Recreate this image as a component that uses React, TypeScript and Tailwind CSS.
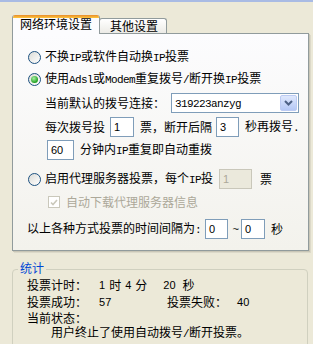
import React from "react";

const L = ({ children }: { children: React.ReactNode }) => (
  <span className="font-['Liberation_Mono',monospace] text-[11px] tracking-[-0.6px]">{children}</span>
);

const Radio = ({ checked }: { checked?: boolean }) => (
  <span className="w-[13px] h-[13px] rounded-full border border-[#1c5180] bg-[linear-gradient(135deg,#dcdcd7,#ffffff)] flex items-center justify-center shrink-0">
    {checked && (
      <span className="w-[7px] h-[7px] rounded-full bg-[radial-gradient(circle_at_40%_35%,#a8f0a4,#21a121_70%)]" />
    )}
  </span>
);

const Input = ({ w, value, disabled }: { w: string; value: string; disabled?: boolean }) => (
  <span
    className={`${w} h-[20px] shrink-0 border flex items-center pl-[3px] font-['Liberation_Sans',sans-serif] text-[11px] ${
      disabled ? "border-[#c9c7ba] bg-[#ebe9dc] text-[#aca899]" : "border-[#7f9db9] bg-white text-black"
    }`}
  >
    {value}
  </span>
);

export default function App() {
  return (
    <div className="w-[313px] h-[344px] overflow-hidden bg-[#ece9d8] text-black text-[12px] leading-[12px] font-['Noto_Sans_CJK_SC',sans-serif]">
      <div className="h-[2px] bg-[#a9bbe4]" />
      {/* tabs */}
      <div className="relative z-10 flex items-end ml-[12px] mt-[13px] h-[19px]">
        <div className="relative z-10 w-[88px] h-[19px] bg-[#fcfcfe] border-x border-[#919b9c] rounded-t-[3px] overflow-hidden flex flex-col">
          <div className="h-[3px] bg-[linear-gradient(180deg,#e68b2c,#ffc73c)]" />
          <div className="pl-[7px] leading-[12px]">网络环境设置</div>
        </div>
        <div className="-ml-px mb-[1px] w-[68px] h-[15px] border border-b-0 border-[#919b9c] rounded-t-[3px] bg-[linear-gradient(180deg,#ffffff,#ecebe6)] pl-[10px] pt-[1px] leading-[12px]">
          其他设置
        </div>
      </div>
      {/* panel */}
      <div className="-mt-px ml-[12px] w-[297px] h-[218px] border border-[#919b9c] bg-[linear-gradient(180deg,#fcfcfe,#f3f2ec)] shadow-[1px_1px_0_#c9c6b6,2px_2px_0_#dcd9c9] flex flex-col">
        <div className="mt-[15px] h-[16px] flex items-center pl-[15px]">
          <Radio />
          <span className="ml-[4px]">
            不换<L>IP</L>或软件自动换<L>IP</L>投票
          </span>
        </div>
        <div className="mt-[6px] h-[16px] flex items-center pl-[15px]">
          <Radio checked />
          <span className="ml-[4px]">
            使用<L>Adsl</L>或<L>Modem</L>重复拨号<L>/</L>断开换<L>IP</L>投票
          </span>
        </div>
        <div className="mt-[6px] h-[20px] flex items-center pl-[32px]">
          <span>当前默认的拨号连接：</span>
          <span className="ml-[6px] w-[128px] h-[20px] border border-[#7f9db9] bg-white flex items-center justify-between">
            <span className="pl-[3px]">
              <L>319223anzyg</L>
            </span>
            <span className="w-[17px] h-[16px] mr-[1px] rounded-[2px] border border-[#bccbf3] bg-[linear-gradient(180deg,#dfe8fd,#b5c8f6)] flex items-center justify-center">
              <svg width="9" height="6" viewBox="0 0 9 6">
                <path d="M1 1 L4.5 4.5 L8 1" fill="none" stroke="#4d6185" strokeWidth="2" />
              </svg>
            </span>
          </span>
        </div>
        <div className="mt-[4px] h-[20px] flex items-center pl-[32px]">
          <span>每次拨号投</span>
          <span className="ml-[5px]">
            <Input w="w-[24px]" value="1" />
          </span>
          <span className="ml-[6px]">票，断开后隔</span>
          <span className="ml-[4px]">
            <Input w="w-[23px]" value="3" />
          </span>
          <span className="ml-[6px]">
            秒再拨号<L>.</L>
          </span>
        </div>
        <div className="mt-[3px] h-[20px] flex items-center pl-[34px]">
          <Input w="w-[27px]" value="60" />
          <span className="ml-[6px]">
            分钟内<L>IP</L>重复即自动重拨
          </span>
        </div>
        <div className="mt-[9px] h-[20px] flex items-center pl-[15px]">
          <Radio />
          <span className="ml-[4px]">
            启用代理服务器投票，每个<L>IP</L>投
          </span>
          <span className="ml-[6px]">
            <Input w="w-[33px]" value="1" disabled />
          </span>
          <span className="ml-[8px]">票</span>
        </div>
        <div className="mt-[5px] h-[16px] flex items-center pl-[35px]">
          <span className="w-[12px] h-[12px] border border-[#cac8bb] bg-white flex items-center justify-center">
            <svg width="8" height="7" viewBox="0 0 8 7">
              <path d="M1 3.5 L3 5.5 L7 1" fill="none" stroke="#cac8bb" strokeWidth="1.6" />
            </svg>
          </span>
          <span className="ml-[6px] text-[#aca899]">自动下载代理服务器信息</span>
        </div>
        <div className="mt-[9px] h-[20px] flex items-center pl-[14px]">
          <span>
            以上各种方式投票的时间间隔为<L>:</L>
          </span>
          <span className="ml-[4px]">
            <Input w="w-[23px]" value="0" />
          </span>
          <span className="ml-[2px] w-[11px] text-center">
            <L>~</L>
          </span>
          <span>
            <Input w="w-[24px]" value="0" />
          </span>
          <span className="ml-[6px]">秒</span>
        </div>
      </div>
      {/* stats group */}
      <div className="relative mt-[18px] ml-[12px] w-[296px] h-[100px] border border-[#d0d0bf] rounded-[4px]">
        <span className="absolute left-[5px] top-[-8px] px-[2px] bg-[#ece9d8] text-[#0046d5] leading-[12px]">统计</span>
        <div className="mt-[7px] h-[16px] flex items-center pl-[14px]">
          <span>投票计时：</span>
          <span className="ml-[12px] font-['Liberation_Sans',sans-serif] text-[11px]">1</span>
          <span className="ml-[4px]">时</span>
          <span className="ml-[4px] font-['Liberation_Sans',sans-serif] text-[11px]">4</span>
          <span className="ml-[4px]">分</span>
          <span className="ml-[16px] font-['Liberation_Sans',sans-serif] text-[11px]">20</span>
          <span className="ml-[7px]">秒</span>
        </div>
        <div className="mt-[1px] h-[16px] flex items-center pl-[14px]">
          <span className="w-[140px] flex items-center">
            <span>投票成功：</span>
            <span className="ml-[12px] font-['Liberation_Sans',sans-serif] text-[11px]">57</span>
          </span>
          <span>投票失败：</span>
          <span className="ml-[10px] font-['Liberation_Sans',sans-serif] text-[11px]">40</span>
        </div>
        <div className="h-[15px] flex items-center pl-[14px]">
          <span>当前状态：</span>
        </div>
        <div className="h-[16px] flex items-center pl-[38px]">
          <span>
            用户终止了使用自动拨号<L>/</L>断开投票。
          </span>
        </div>
      </div>
    </div>
  );
}
